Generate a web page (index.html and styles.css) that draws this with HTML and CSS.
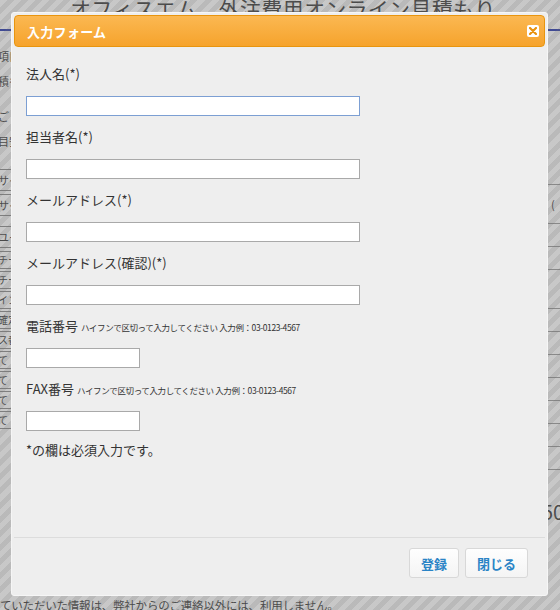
FILE: index.html
```html
<!DOCTYPE html>
<html lang="ja">
<head>
<meta charset="utf-8">
<title>入力フォーム</title>
<link rel="stylesheet" href="styles.css">
</head>
<body>
<div class="page">
  <h1 class="page-title">オフィスエム　外注費用オンライン見積もり</h1>
  <div class="page-rule"></div>
  <div class="page-body">
    <div class="left-col">
      <div class="lrow">項目</div>
      <div class="lrow">積もり</div>
      <div class="lrow gap">ご</div>
      <div class="lrow">目安</div>
      <div class="lrow cell gap2">サイト</div>
      <div class="lrow cell">サイト</div>
      <div class="lrow cell gap">ユーザ</div>
      <div class="lrow cell small">チー</div>
      <div class="lrow cell small">チー</div>
      <div class="lrow cell small">イン</div>
      <div class="lrow cell small">確定</div>
      <div class="lrow cell small">ス番</div>
      <div class="lrow cell small">て</div>
      <div class="lrow cell small">て</div>
      <div class="lrow cell small">て</div>
      <div class="lrow cell small">て</div>
    </div>
    <div class="right-col">
      <div class="rcell tall">(</div>
      <div class="rcell"></div>
      <div class="rcell"></div>
      <div class="rcell tall"></div>
      <div class="rcell"></div>
      <div class="rcell"></div>
      <div class="rcell"></div>
      <div class="rcell"></div>
      <div class="rcell"></div>
      <div class="rcell"></div>
      <div class="rcell"></div>
      <div class="rcell"></div>
      <div class="total">50</div>
    </div>
  </div>
  <p class="page-note">ていただいた情報は、弊社からのご連絡以外には、利用しません。</p>
</div>

<div class="overlay"></div>

<div class="dialog">
  <div class="titlebar">
    <span class="title">入力フォーム</span>
    <span class="close">
      <svg width="8" height="8" viewBox="0 0 8 8"><path d="M1 1L7 7M7 1L1 7" stroke="#e8920f" stroke-width="2.2" stroke-linecap="round"/></svg>
    </span>
  </div>
  <div class="content">
    <div class="field">
      <div class="label">法人名(*)</div>
      <div class="input focus"></div>
    </div>
    <div class="field">
      <div class="label">担当者名(*)</div>
      <div class="input"></div>
    </div>
    <div class="field">
      <div class="label">メールアドレス(*)</div>
      <div class="input"></div>
    </div>
    <div class="field">
      <div class="label">メールアドレス(確認)(*)</div>
      <div class="input"></div>
    </div>
    <div class="field">
      <div class="label">電話番号 <span class="hint">ハイフンで区切って入力してください 入力例：03-0123-4567</span></div>
      <div class="input short"></div>
    </div>
    <div class="field">
      <div class="label">FAX番号 <span class="hint">ハイフンで区切って入力してください 入力例：03-0123-4567</span></div>
      <div class="input short"></div>
    </div>
    <div class="note">*の欄は必須入力です。</div>
  </div>
  <div class="buttonpane">
    <button class="btn">登録</button>
    <button class="btn">閉じる</button>
  </div>
</div>
</body>
</html>
```

FILE: styles.css
```css
html, body {
  margin: 0;
  padding: 0;
}
body {
  width: 560px;
  height: 610px;
  overflow: hidden;
  position: relative;
  background: #fff;
  font-family: "Noto Sans CJK JP", "Noto Sans", sans-serif;
  color: #333;
}

/* background page */
.page {
  width: 560px;
}
.page-title {
  margin: -7px 0 0 70px;
  font-size: 21px;
  font-weight: normal;
  color: #333;
  line-height: 30px;
  white-space: nowrap;
  letter-spacing: 0.3px;
}
.page-rule {
  height: 2px;
  background: #2233aa;
  margin-top: 6px;
}
.page-body {
  display: flex;
  justify-content: space-between;
  height: 564px;
}
.left-col {
  width: 60px;
  margin-left: -2px;
  padding-top: 13px;
  font-size: 11px;
}
.lrow {
  height: 25px;
  line-height: 25px;
  white-space: nowrap;
}
.lrow.gap { margin-top: 10px; }
.lrow.gap2 { margin-top: 15px; }
.lrow.cell {
  border-top: 1px solid #888;
  border-bottom: 1px solid #888;
  height: 20px;
  line-height: 20px;
  margin-bottom: 3px;
}
.lrow.small { height: 16px; line-height: 16px; font-size: 10px; margin-bottom: 2px; }
.right-col {
  width: 14px;
  padding-top: 153px;
  font-size: 11px;
}
.rcell {
  height: 22px;
  border-top: 1px solid #999;
  border-left: 1px solid #999;
  line-height: 22px;
  padding-left: 4px;
}
.rcell.tall { height: 38px; line-height: 38px; }
.total {
  margin-top: 8px;
  margin-left: -4px;
  font-size: 20px;
  line-height: 24px;
}
.page-note {
  margin: 0;
  font-size: 11.5px;
  line-height: 16px;
  white-space: nowrap;
  position: relative;
  top: 2px;
  letter-spacing: -0.2px;
}

/* overlay */
.overlay {
  position: absolute;
  inset: 0;
  background: repeating-linear-gradient(135deg,
    rgba(110,110,110,0.38) 0 5px,
    rgba(110,110,110,0.48) 5px 10px);
}

/* dialog */
.dialog {
  position: absolute;
  left: 11px;
  top: 12px;
  width: 537px;
  height: 584px;
  box-sizing: border-box;
  border: 1px solid #f6f6f6;
  padding: 2px;
  background: #eeeeee;
  border-radius: 3px;
  display: flex;
  flex-direction: column;
}
.titlebar {
  height: 32px;
  box-sizing: border-box;
  border: 1px solid #e8950f;
  border-radius: 4px;
  background: linear-gradient(#fbb852, #f6a32c);
  display: flex;
  align-items: center;
  justify-content: space-between;
  padding: 0 4px 0 12px;
  flex: none;
}
.title {
  color: #fff;
  font-weight: bold;
  font-size: 13px;
  letter-spacing: 0.3px;
}
.close {
  width: 12px;
  height: 12px;
  background: #fff;
  border-radius: 2px;
  display: flex;
  align-items: center;
  justify-content: center;
  margin-right: 1px;
}
.content {
  flex: 1;
  padding: 17px 12px 0 12px;
}
.field {
  margin-bottom: 11px;
}
.label {
  font-size: 13px;
  line-height: 20px;
  height: 20px;
  margin-bottom: 12px;
  color: #333;
  white-space: nowrap;
}
.hint {
  font-size: 8.5px;
  letter-spacing: -0.4px;
}
.input {
  width: 334px;
  height: 20px;
  box-sizing: border-box;
  background: #fff;
  border: 1px solid #a9a9a9;
}
.input.focus {
  border-color: #7c9fd3;
}
.input.short {
  width: 114px;
}
.note {
  font-size: 13px;
  line-height: 20px;
  margin-top: -2px;
}
.buttonpane {
  flex: none;
  height: 56px;
  border-top: 1px solid #dcdcdc;
  display: flex;
  justify-content: flex-end;
  align-items: flex-start;
  gap: 6px;
  padding: 10px 17px 0 0;
  box-sizing: border-box;
}
.btn {
  height: 30px;
  box-sizing: border-box;
  border: 1px solid #d8d8d8;
  border-radius: 3px;
  background: linear-gradient(#fefefe, #f4f4f4);
  color: #2a84c6;
  font-family: "Noto Sans CJK JP", sans-serif;
  font-size: 13px;
  font-weight: bold;
  padding: 0;
  width: 50px;
}
.btn + .btn {
  width: 63px;
}
```
